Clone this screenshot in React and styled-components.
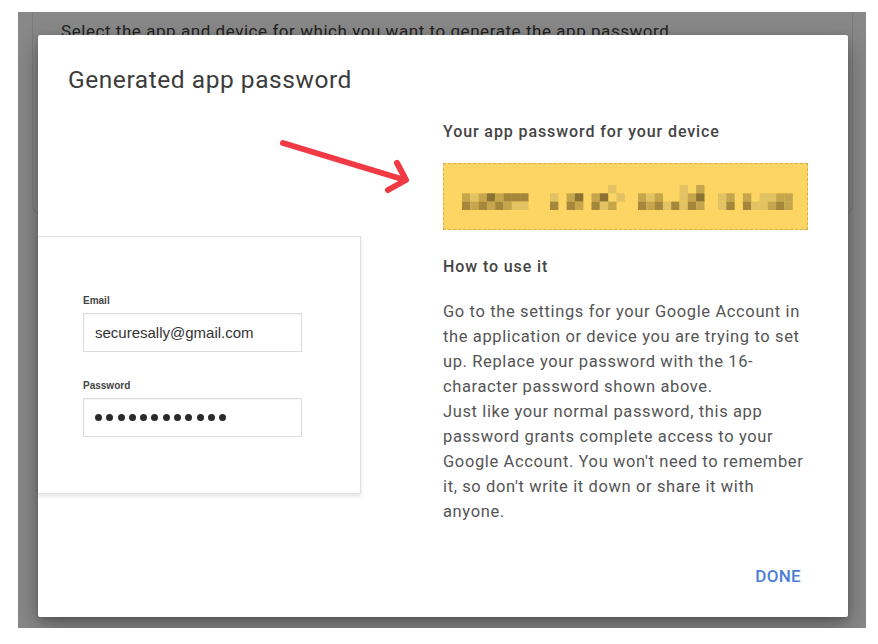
import React from "react";
import styled, { createGlobalStyle } from "styled-components";

const GlobalStyle = createGlobalStyle`
  body {
    margin: 0;
    background: #fff;
    font-family: Roboto, "Noto Sans", sans-serif;
  }
`;

const Page = styled.div`
  padding: 12px 0 0 18px;
`;

const Frame = styled.div`
  position: relative;
  width: 848px;
  height: 616px;
  background: #888;
  overflow: hidden;
`;

const BackCard = styled.div`
  margin-left: 14px;
  width: 821px;
  height: 203px;
  box-sizing: border-box;
  border: 1px solid #7b7b7b;
  border-top: none;
  border-radius: 0 0 10px 10px;
  padding: 8px 0 0 28px;
  font-size: 17px;
  line-height: 22px;
  letter-spacing: 0.55px;
  color: #222;
  white-space: nowrap;
`;

const Dialog = styled.div`
  position: absolute;
  left: 20px;
  top: 23px;
  width: 810px;
  height: 582px;
  background: #fff;
  border-radius: 2px;
  box-shadow: 0 10px 24px rgba(0, 0, 0, 0.3), 0 2px 6px rgba(0, 0, 0, 0.2);
  display: flex;
  flex-direction: column;
`;

const Title = styled.h2`
  margin: 0;
  padding: 29px 30px 0;
  font-size: 24.5px;
  line-height: 32px;
  font-weight: 400;
  letter-spacing: 0.55px;
  color: #3c3c3c;
`;

const Body = styled.div`
  display: grid;
  grid-template-columns: 405px 365px;
  flex: 1;
`;

const LeftCol = styled.div`
  display: flex;
  flex-direction: column;
`;

const Arrow = styled.svg`
  display: block;
  margin: 40px 0 0 240px;
`;

const FormCard = styled.div`
  margin-top: 40px;
  width: 323px;
  height: 258px;
  box-sizing: border-box;
  border: 1px solid #e2e2e2;
  border-left: none;
  box-shadow: 0 2px 4px rgba(0, 0, 0, 0.12);
  padding: 57px 0 0 45px;
  font-family: "Liberation Sans", Arial, sans-serif;
`;

const Label = styled.div`
  font-size: 10px;
  line-height: 13px;
  font-weight: 700;
  color: #444;
  margin-top: ${(p) => p.$gap || 0}px;
`;

const Field = styled.div`
  margin-top: 6px;
  width: 219px;
  height: 39px;
  box-sizing: border-box;
  border: 1px solid #dcdcdc;
  box-shadow: inset 0 1px 1px rgba(0, 0, 0, 0.04);
  padding: 0 11px;
  display: flex;
  align-items: center;
  gap: 4.3px;
  font-size: 15px;
  color: #333;
`;

const Dot = styled.span`
  width: 7px;
  height: 7px;
  border-radius: 50%;
  background: #2a2a2a;
`;

const RightCol = styled.div`
  display: flex;
  flex-direction: column;
  padding-top: 25px;
  color: #444;
`;

const Heading = styled.div`
  font-size: 16px;
  line-height: 22px;
  font-weight: 500;
  letter-spacing: 0.9px;
  color: #444;
  margin-top: ${(p) => p.$gap || 0}px;
`;

const KeyBox = styled.div`
  margin-top: 20px;
  height: 67px;
  box-sizing: border-box;
  background: #fdd563;
  border: 1px dashed #d2b04e;
`;

const Para = styled.p`
  margin: 21px 0 0;
  font-size: 16.5px;
  line-height: 25px;
  letter-spacing: 0.62px;
  color: #555;
  white-space: nowrap;
`;

const DoneButton = styled.button`
  align-self: flex-end;
  margin: 42px 7px 0 0;
  padding: 0;
  border: none;
  background: none;
  font-family: Roboto, sans-serif;
  font-size: 17px;
  line-height: 20px;
  font-weight: 500;
  letter-spacing: 0.3px;
  color: #4a80d8;
  cursor: pointer;
`;

const shades = { l: "#e2c262", m: "#c6a64c", d: "#a4873b", D: "#8a7232" };

// blurred key, one string per row, x0 in px inside the box
const groups = [
  { x: 18, rows: ["........", "mlmDmddd", "dmdmdmll"] },
  { x: 106, rows: [".......l.", "l.mD.mD.l", "d.dm.dlm."] },
  { x: 194, rows: [".....l.m", "mlm..lmD", "dmdldldm"] },
  { x: 274, rows: ["........", "lm.m.llmm", "ld.dllmdm"] },
];

const Mosaic = () => {
  const cells = [];
  groups.forEach((g, gi) => {
    g.rows.forEach((row, ri) => {
      row.split("").forEach((c, ci) => {
        if (shades[c]) {
          cells.push(
            <rect
              key={`${gi}-${ri}-${ci}`}
              x={g.x + ci * 8.3}
              y={21 + ri * 8.3}
              width="8.4"
              height="8.4"
              fill={shades[c]}
            />
          );
        }
      });
    });
  });
  return (
    <svg width="363" height="65" viewBox="0 0 363 65">
      {cells}
    </svg>
  );
};

const lines = [
  "Go to the settings for your Google Account in",
  "the application or device you are trying to set",
  "up. Replace your password with the 16-",
  "character password shown above.",
  "Just like your normal password, this app",
  "password grants complete access to your",
  "Google Account. You won't need to remember",
  "it, so don't write it down or share it with",
  "anyone.",
];

const App = () => {
  return (
    <Page>
      <GlobalStyle />
      <Frame>
        <BackCard>
          Select the app and device for which you want to generate the app password
        </BackCard>
        <Dialog>
          <Title>Generated app password</Title>
          <Body>
            <LeftCol>
              <Arrow width="135" height="60" viewBox="0 0 135 60">
                <g
                  stroke="#f23a45"
                  strokeWidth="6"
                  strokeLinecap="round"
                  strokeLinejoin="round"
                  fill="none"
                >
                  <path d="M5 7 L127 44" />
                  <path d="M119 27 L128 44 L110 54" />
                </g>
              </Arrow>
              <FormCard>
                <Label>Email</Label>
                <Field>securesally@gmail.com</Field>
                <Label $gap={27}>Password</Label>
                <Field>
                  {Array.from({ length: 12 }).map((_, i) => (
                    <Dot key={i} />
                  ))}
                </Field>
              </FormCard>
            </LeftCol>
            <RightCol>
              <Heading>Your app password for your device</Heading>
              <KeyBox>
                <Mosaic />
              </KeyBox>
              <Heading $gap={26}>How to use it</Heading>
              <Para>
                {lines.map((l, i) => (
                  <React.Fragment key={i}>
                    {l}
                    {i < lines.length - 1 && <br />}
                  </React.Fragment>
                ))}
              </Para>
              <DoneButton>DONE</DoneButton>
            </RightCol>
          </Body>
        </Dialog>
      </Frame>
    </Page>
  );
};

export default App;
